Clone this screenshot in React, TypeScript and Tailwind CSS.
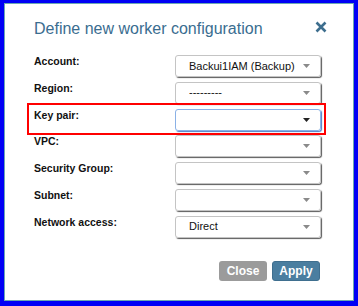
const fields = [
  { label: "Account:", value: "Backui1IAM (Backup)" },
  { label: "Region:", value: "---------" },
  { label: "Key pair:", value: "", focused: true },
  { label: "VPC:", value: "" },
  { label: "Security Group:", value: "" },
  { label: "Subnet:", value: "" },
  { label: "Network access:", value: "Direct" },
];

function Select({ value, focused }: { value: string; focused?: boolean }) {
  return (
    <div
      className={`flex h-[22px] w-[146px] items-center rounded-[3px] border pl-[13px] pr-[10px] ${
        focused
          ? "border-[#8ab1e6] shadow-[1px_1px_1px_#4f7fc6]"
          : "border-[#c4c4c4] shadow-[1px_1px_1px_#5a5a5a]"
      }`}
    >
      <span className="flex-1 truncate text-[11px] leading-[13px] text-[#111]">
        {value}
      </span>
      <svg width="7" height="4" viewBox="0 0 7 4">
        <path d="M0 0h7L3.5 4z" fill={focused ? "#222" : "#8a8a8a"} />
      </svg>
    </div>
  );
}

export default function App() {
  return (
    <div className="h-[306px] w-[358px] bg-[#0000f5] pb-[5px] pl-[4px] pr-[4px] pt-[3px] font-['Liberation_Sans',Arial,sans-serif]">
      <div className="flex h-full flex-col border border-[#6aa8b3] bg-white pl-[29px] pr-[32px] pt-[15px]">
        <div className="flex items-start justify-between">
          <h1 className="text-[16px] leading-[20px] text-[#3a6d90]">
            Define new worker configuration
          </h1>
          <svg
            width="12"
            height="12"
            viewBox="0 0 12 12"
            className="-mr-[6px] mt-[2px]"
          >
            <path
              d="M1.5 1.5l9 9M10.5 1.5l-9 9"
              stroke="#3d6e8e"
              strokeWidth="2.6"
            />
          </svg>
        </div>

        <div className="mt-[16px] flex flex-col gap-[4.8px]">
          {fields.map((f) => (
            <div
              key={f.label}
              className="relative grid h-[22px] grid-cols-[141px_146px]"
            >
              <span className="text-[10.5px] font-bold leading-[13px] text-[#111]">
                {f.label}
              </span>
              <Select value={f.value} focused={f.focused} />
              {f.focused && (
                <div className="pointer-events-none absolute -bottom-[4.5px] -left-[7px] -right-[5px] -top-[5.6px] border-2 border-[#ff0000]" />
              )}
            </div>
          ))}
        </div>

        <div className="mt-[23px] flex justify-end gap-[5px] pr-[1px]">
          <button className="h-[20px] w-[48px] rounded-[3px] bg-[#9b9b9b] text-[12px] font-bold text-white">
            Close
          </button>
          <button className="h-[20px] w-[48px] rounded-[3px] border border-[#3f6f8f] bg-[#4a7ea0] text-[12px] font-bold text-white">
            Apply
          </button>
        </div>
      </div>
    </div>
  );
}
